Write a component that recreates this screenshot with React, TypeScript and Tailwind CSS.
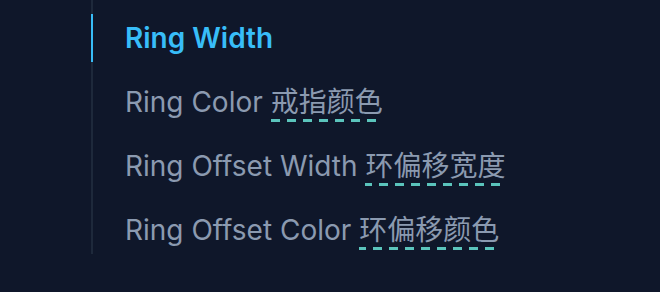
import React from "react";

const items: { en: string; zh?: string; active?: boolean }[] = [
  { en: "Ring Width", active: true },
  { en: "Ring Color", zh: "戒指颜色" },
  { en: "Ring Offset Width", zh: "环偏移宽度" },
  { en: "Ring Offset Color", zh: "环偏移颜色" },
];

export default function App() {
  return (
    <div className="w-[660px] h-[292px] bg-[#0f172a] pl-[91px] font-['Inter','Noto_Sans_CJK_SC',sans-serif] text-[28px] overflow-hidden">
      <ul className="border-l-2 border-[#1e293b] pt-[14px] flex flex-col gap-[16px] w-fit pr-8">
        {items.map((it) => (
          <li key={it.en} className="-ml-[2px] flex">
            <a
              className={
                it.active
                  ? "block border-l-2 border-[#38bdf8] pl-[32px] leading-[48px] font-semibold text-[#38bdf8]"
                  : "block border-l-2 border-transparent pl-[32px] leading-[48px] text-[#8b9ab0]"
              }
            >
              {it.en}
              {it.zh ? (
                <>
                  {" "}
                  <span className="pb-[3px] bg-[linear-gradient(to_right,#5bc4bc_9px,transparent_9px)] bg-[length:16px_3px] bg-bottom bg-repeat-x">
                    {it.zh}
                  </span>
                </>
              ) : null}
            </a>
          </li>
        ))}
      </ul>
    </div>
  );
}
